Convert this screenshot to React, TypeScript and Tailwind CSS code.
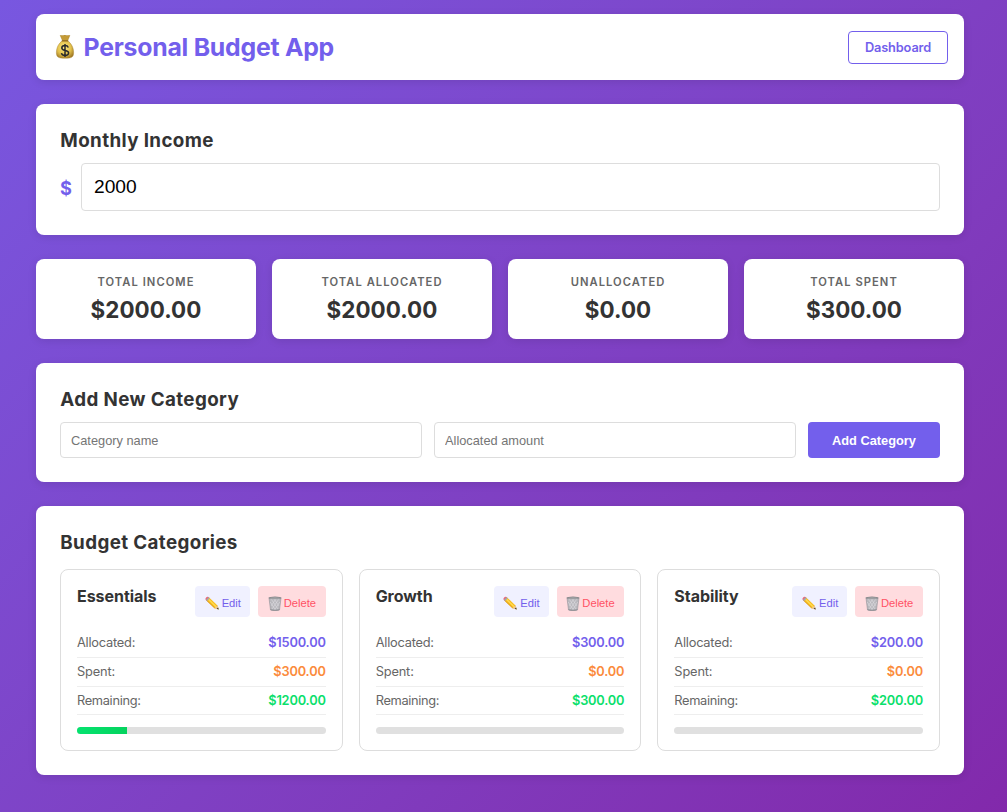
import React from "react";

const sans = "font-['Inter','Liberation_Sans',sans-serif]";
const panel = "rounded-lg bg-white shadow-[0_2px_8px_rgba(0,0,0,0.1)]";

function MoneyBag() {
  return (
    <svg className="h-6 w-5 shrink-0" viewBox="0 0 20 24" aria-hidden="true">
      <defs>
        <radialGradient id="bag" cx="45%" cy="40%" r="65%">
          <stop offset="0" stopColor="#fbe985" />
          <stop offset=".6" stopColor="#e3c14c" />
          <stop offset="1" stopColor="#a27b25" />
        </radialGradient>
      </defs>
      <path d="M7.600 6 5.200.4c1.100-.7 2 .4 3 .1 1.200-.8 2.200-.7 3.100 0 1.200.3 2.300-.8 3.600-.1L12.600 6Z" fill="#c49b36" stroke="#a27b25" strokeWidth=".4" />
      <path d="M7.500 5.800C4 7.800 1.400 12.500 1.400 17.500c0 4.500 1.400 5.700 8.600 5.700s8.600-1.200 8.600-5.700c0-5-2.600-9.700-6.100-11.700Z" fill="url(#bag)" stroke="#a27b25" strokeWidth=".4" />
      <path d="M7.200 5.900h5.600" stroke="#85601c" strokeWidth="1" strokeLinecap="round" />
      <path d="M13.300 12.500c-.5-1.300-1.700-1.900-3.300-1.900-2 0-3.200.9-3.200 2.400 0 3.500 6.800 1.400 6.800 4.800 0 1.700-1.500 2.600-3.600 2.600-1.900 0-3.200-.8-3.600-2.300M10 9v13" fill="none" stroke="#292a2c" strokeWidth="1.500" />
    </svg>
  );
}

function Pencil() {
  return (
    <svg className="h-[14px] w-[14px] shrink-0" viewBox="0 0 14 14" aria-hidden="true">
      <path d="m3.600 1 8.900 8.400 1.200 4-4.200-1.100L.9 4Z" fill="#f8bd20" />
      <path d="m3.400 3.200 7.700 7.500" stroke="#ffdc55" strokeWidth="1.200" />
      <path d="m1.600 4.400 8 7.500" stroke="#d48d18" strokeWidth=".7" />
      <path d="M.8 3.900C-.4 2.400 1.800 0 3.400.900l.900.900-2.600 2.900Z" fill="#ed6678" />
      <path d="m3.500 1.100 1.200 1.100L2 5.100.9 4.100Z" fill="#9fa8ad" />
      <path d="m12.500 9.400 1.200 4-4.200-1.100Z" fill="#edc89a" />
      <path d="m13.100 11.500.6 1.900-2-.6Z" fill="#333" />
    </svg>
  );
}

function Trash() {
  return (
    <svg className="h-[15px] w-[14px] shrink-0" viewBox="0 0 14 15" aria-hidden="true">
      <path d="m1 2 1.500 12c1.500.8 7.500.8 9 0L13 2Z" fill="#b9b8bd" stroke="#929298" strokeWidth=".6" />
      <path d="m3.500 3.500 6.800 10M6.500 3.500l4.300 6.300M2.200 6l5.300 8M10.500 3.500l-6.800 10M7.500 3.500 3.200 9.800M11.800 6l-5.300 8" stroke="#dedce1" strokeWidth=".6" />
      <ellipse cx="7" cy="1.800" rx="6.600" ry="1.200" fill="#858689" />
      <ellipse cx="7" cy="1.900" rx="5.200" ry=".5" fill="#b5b6ba" />
      <path d="M2.700 13.600c2 .8 6.600.8 8.600 0" fill="none" stroke="#838489" strokeWidth=".8" />
    </svg>
  );
}

const stats = [
  { label: "TOTAL INCOME", value: "$2000.00" },
  { label: "TOTAL ALLOCATED", value: "$2000.00" },
  { label: "UNALLOCATED", value: "$0.00" },
  { label: "TOTAL SPENT", value: "$300.00" },
];

const categories = [
  { name: "Essentials", allocated: "$1500.00", spent: "$300.00", remaining: "$1200.00", percent: 20 },
  { name: "Growth", allocated: "$300.00", spent: "$0.00", remaining: "$300.00", percent: 0 },
  { name: "Stability", allocated: "$200.00", spent: "$0.00", remaining: "$200.00", percent: 0 },
];

function Heading({ children }: { children: React.ReactNode }) {
  return <h2 className="h-6 pt-px pl-[0.3px] text-[18.8px] leading-6 font-bold tracking-[0.38px] text-[#333]">{children}</h2>;
}

function Row({ label, value, color, spacing }: { label: string; value: string; color: string; spacing: string }) {
  return (
    <div className="flex h-[28.8px] items-center justify-between border-b border-[#eee] text-[12.8px]">
      <span className={`text-[#666] ${spacing}`}>{label}</span>
      <span className={`font-semibold tracking-[-0.18px] ${color}`}>{value}</span>
    </div>
  );
}

export default function App() {
  const field = "h-9 min-w-0 flex-1 rounded border border-[#ddd] px-[10px] font-['Liberation_Sans',sans-serif] text-[12.8px] placeholder:text-[#757575]";
  return (
    <div className={`${sans} h-[812px] overflow-hidden bg-linear-135 from-[#7857e0] to-[#8229ab] pt-[14px] pr-[43px] pl-9`}>
      <main className="flex flex-col gap-6">
        <header className={`${panel} flex h-[66px] items-center justify-between pr-4 pl-[19px]`}>
          <div className="flex items-center gap-2">
            <MoneyBag />
            <h1 className="pb-px pl-[0.5px] text-[24.8px] leading-8 font-bold tracking-[-0.23px] text-[#735fec]">Personal Budget App</h1>
          </div>
          <button className="h-[33px] w-[100px] rounded border border-[#735fec] pt-px text-[12.8px] font-semibold tracking-[-0.15px] text-[#735fec]">Dashboard</button>
        </header>

        <section className={`${panel} h-[131px] px-6 pt-6`}>
          <Heading>Monthly Income</Heading>
          <div className="mt-[11px] flex items-center gap-2">
            <span className="w-[13px] pt-1 text-[18.2px] font-bold text-[#735fec]">$</span>
            <input className="h-12 min-w-0 flex-1 rounded border border-[#ddd] px-3 font-['Liberation_Sans',sans-serif] text-[19.2px] text-black" defaultValue="2000" />
          </div>
        </section>

        <section className="grid grid-cols-4 gap-4">
          {stats.map((s) => (
            <div key={s.label} className={`${panel} flex h-20 flex-col items-center pt-4`}>
              <div className="text-[11.2px] leading-[14px] font-semibold tracking-[1.05px] text-[#666]">{s.label}</div>
              <div className="mt-[7px] text-[22.4px] leading-7 font-bold tracking-[0.05px] text-[#333]">{s.value}</div>
            </div>
          ))}
        </section>

        <section className={`${panel} h-[119px] px-6 pt-6`}>
          <Heading>Add New Category</Heading>
          <div className="mt-[11px] flex gap-3">
            <input className={field} placeholder="Category name" />
            <input className={field} placeholder="Allocated amount" />
            <button className="h-9 w-[132px] rounded bg-[#735fec] pt-px font-['Liberation_Sans',sans-serif] text-[12.8px] font-bold text-white">Add Category</button>
          </div>
        </section>

        <section className={`${panel} h-[269px] px-6 pt-6`}>
          <Heading>Budget Categories</Heading>
          <div className="mt-[15px] grid grid-cols-3 gap-4">
            {categories.map((c) => (
              <article key={c.name} className="h-[182px] rounded-lg border border-[#ddd] px-4 pt-4">
                <div className="flex items-start justify-between">
                  <h3 className="text-base leading-5 font-bold tracking-[-0.05px] text-[#333]">{c.name}</h3>
                  <div className="flex gap-2 font-['Liberation_Sans',sans-serif] text-[11.2px]">
                    <button className="flex h-[31px] w-[55px] items-center gap-[3px] rounded bg-[#f0f1ff] pt-[3px] pl-[9.5px] text-[#735fec]"><Pencil />Edit</button>
                    <button className="flex h-[31px] w-[67.5px] items-center gap-[2px] rounded bg-[#ffdcdf] pt-[3px] pl-[9.5px] text-[#ff5265]"><Trash />Delete</button>
                  </div>
                </div>
                <div className="mt-3">
                  <Row label="Allocated:" value={c.allocated} color="text-[#735fec]" spacing="tracking-[-0.22px]" />
                  <Row label="Spent:" value={c.spent} color="text-[#fb8b3c]" spacing="tracking-[-0.15px]" />
                  <Row label="Remaining:" value={c.remaining} color="text-[#0bdf6c]" spacing="tracking-[-0.32px]" />
                </div>
                <div className="mt-3 h-[7px] overflow-hidden rounded bg-[#e0e0e0]">
                  <div className="h-full bg-linear-to-r from-[#05e36f] to-[#05d35e]" style={{ width: `${c.percent}%` }} />
                </div>
              </article>
            ))}
          </div>
        </section>
      </main>
    </div>
  );
}
